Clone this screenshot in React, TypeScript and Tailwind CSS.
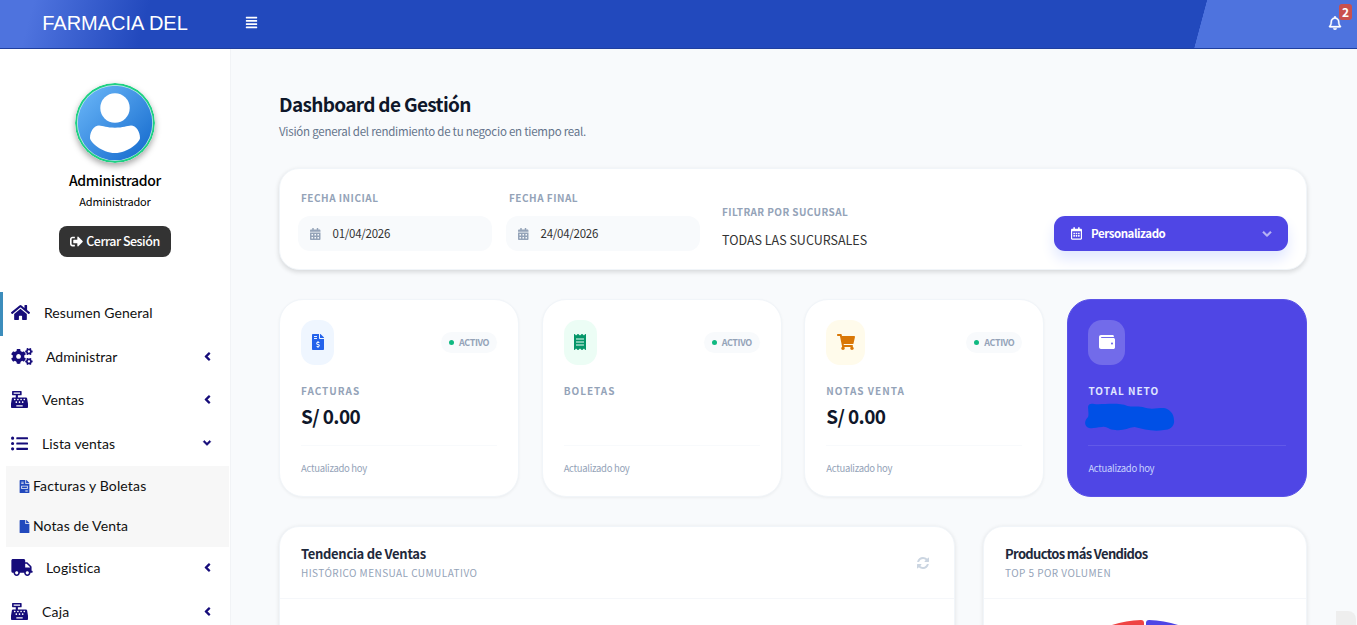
import type { ReactNode } from 'react'
import {
  FaAlignJustify,
  FaAngleDown,
  FaAngleLeft,
  FaCalendarAlt,
  FaCashRegister,
  FaChevronDown,
  FaCogs,
  FaFile,
  FaFileInvoice,
  FaFileInvoiceDollar,
  FaHome,
  FaListUl,
  FaReceipt,
  FaRegBell,
  FaRegCalendarAlt,
  FaShoppingCart,
  FaSignOutAlt,
  FaTruck,
  FaWallet,
} from 'react-icons/fa'

function Topbar() {
  return (
    <header className="flex h-[49px] shrink-0 border-b border-[#1f3f9f] bg-[#2249bd]">
      <div className="flex w-[230px] items-center justify-center bg-[linear-gradient(105deg,#4e73de_14%,#2249bd_62%)] pb-[2px] font-['Liberation_Sans',sans-serif] text-[20px] text-white">
        FARMACIA DEL
      </div>
      <div className="flex flex-1 items-center justify-between bg-[linear-gradient(105deg,#2249bd_85.7%,#4e73de_85.75%)] pl-[15px]">
        <FaAlignJustify className="mb-[3px] size-[13px] text-white" />
        <div className="relative mr-[15px] mb-[2px]">
          <FaRegBell className="size-[14px] stroke-white stroke-[12px] text-white" />
          <span className="absolute -top-[12px] left-[11px] flex h-4 w-[13px] items-center justify-center rounded-[3px] bg-[#c9504f] pb-px text-[12px] leading-none font-bold text-white">
            2
          </span>
        </div>
      </div>
    </header>
  )
}

function Avatar() {
  return (
    <svg viewBox="0 0 80 80" className="size-20 rounded-full shadow-[0_3px_6px_rgba(0,0,0,0.35)]">
      <defs>
        <linearGradient id="avatar" x1="0" y1="0" x2="1" y2="1">
          <stop offset="0.1" stopColor="#64b1f5" />
          <stop offset="0.9" stopColor="#1a6fd0" />
        </linearGradient>
      </defs>
      <circle cx="40" cy="40" r="40" fill="#1fd083" />
      <circle cx="40" cy="40" r="38" fill="#c9eef0" />
      <circle cx="40" cy="40" r="37.3" fill="url(#avatar)" />
      <circle cx="40" cy="25" r="14.7" fill="#fff" />
      <path
        d="M24 42.5c4 .2 8 2.200 16 2.200s12-2 16-2.200c5 0 9 6 9 12.500 0 4-12 15-25 15s-25-11-25-15c0-6.500 4-12.500 9-12.500Z"
        fill="#fff"
      />
    </svg>
  )
}

interface MenuItemProps {
  icon: ReactNode
  label: ReactNode
  active?: boolean
  arrow?: 'left' | 'down'
}

function MenuItem({ icon, label, active, arrow }: MenuItemProps) {
  return (
    <a
      href="#"
      className={`flex h-[43.5px] items-center border-l-[3px] pb-[2px] pl-2 text-[#160c7a] ${active ? 'border-[#3c8dbc]' : 'border-transparent'}`}
    >
      {icon}
      {label}
      {arrow === 'left' && <FaAngleLeft className="mr-4 ml-auto size-[13px] stroke-current stroke-[16px]" />}
      {arrow === 'down' && <FaAngleDown className="mr-[17px] ml-auto size-3 stroke-current stroke-[16px]" />}
    </a>
  )
}

function Sidebar() {
  return (
    <aside className="w-[231px] shrink-0 overflow-hidden border-r border-[#f1f3f6] bg-white">
      <div className="flex h-[243px] flex-col items-center pt-[34px]">
        <Avatar />
        <div className="mt-2 text-[14px] leading-[18px] font-medium tracking-[-0.3px] text-black">Administrador</div>
        <div className="mt-1 text-[11px] leading-4 tracking-[-0.15px] text-black">Administrador</div>
        <button className="mt-[17px] flex h-[31px] w-28 items-center justify-center gap-[3px] rounded-lg bg-[#333] pb-px text-[12.5px] font-medium tracking-[-0.5px] text-white">
          <FaSignOutAlt className="size-[13px]" />
          Cerrar Sesión
        </button>
      </div>
      <nav className="font-['Lato','Open_Sans',sans-serif] text-[14px] text-[#111]">
        <MenuItem
          active
          icon={<FaHome className="size-[19px]" />}
          label={<span className="ml-[14px] tracking-[0.05px] text-[#111]">Resumen General</span>}
        />
        <MenuItem
          arrow="left"
          icon={<FaCogs className="h-[17px] w-[22px]" />}
          label={<span className="ml-[13px] text-[#111]">Administrar</span>}
        />
        <MenuItem
          arrow="left"
          icon={<FaCashRegister className="size-[17px]" />}
          label={<span className="ml-[14px] tracking-[0.1px] text-[#111]">Ventas</span>}
        />
        <MenuItem
          arrow="down"
          icon={<FaListUl className="size-[17px]" />}
          label={<span className="ml-[14px] tracking-[0.1px] text-[#111]">Lista ventas</span>}
        />
        <div className="mr-px ml-[6px] h-[81px] bg-[#f7f7f7]">
          <a href="#" className="flex h-10 items-center gap-[2px] pl-3">
            <FaFileInvoice className="size-[13px] text-[#2249bd]" />
            <span className="mb-px tracking-[0.15px]">Facturas y Boletas</span>
          </a>
          <a href="#" className="flex h-10 items-center gap-[2px] pl-3">
            <FaFile className="size-[13px] text-[#2249bd]" />
            <span className="mb-px tracking-[0.1px]">Notas de Venta</span>
          </a>
        </div>
        <MenuItem
          arrow="left"
          icon={<FaTruck className="h-[17px] w-[22px]" />}
          label={<span className="ml-[13px] tracking-[0.15px] text-[#111]">Logistica</span>}
        />
        <MenuItem
          arrow="left"
          icon={<FaCashRegister className="size-[17px]" />}
          label={<span className="ml-[14px] tracking-[0.2px] text-[#111]">Caja</span>}
        />
      </nav>
    </aside>
  )
}

function DateField({ label, value }: { label: string; value: string }) {
  return (
    <div className="w-[194px]">
      <div className="pl-[3px] text-[10px] leading-4 font-bold tracking-[0.5px] text-[#94a3b8]">{label}</div>
      <div className="mt-[10px] flex h-[35px] items-center rounded-xl bg-[#f8fafc] pl-3 text-[11.5px] tracking-[-0.25px] text-[#333]">
        <FaCalendarAlt className="mr-3 h-3 w-[10.5px] text-[#94a3b8]" />
        {value}
      </div>
    </div>
  )
}

function Filters() {
  return (
    <section className="flex h-[102px] rounded-[20px] border border-[#f1f5f9] bg-white px-[18px] pt-[21px] shadow-[0_2px_5px_rgba(0,0,0,0.14)]">
      <DateField label="FECHA INICIAL" value="01/04/2026" />
      <div className="ml-[14px]">
        <DateField label="FECHA FINAL" value="24/04/2026" />
      </div>
      <div className="mt-[14px] ml-[22px]">
        <div className="text-[10px] leading-4 font-bold tracking-[0.4px] text-[#94a3b8]">FILTRAR POR SUCURSAL</div>
        <div className="mt-[11px] text-[12.5px] leading-[18px] text-[#333]">TODAS LAS SUCURSALES</div>
      </div>
      <button className="mt-[26px] ml-auto flex h-[35px] w-[234px] items-center rounded-[11px] bg-[#4f46e5] pr-4 pl-[17px] text-[11.5px] font-bold tracking-[-0.45px] text-white shadow-[0_8px_14px_#e0e7ff]">
        <FaRegCalendarAlt className="mr-[9px] h-[13px] w-[11px]" />
        Personalizado
        <FaChevronDown className="ml-auto size-[10px] stroke-current stroke-[30px] opacity-60" />
      </button>
    </section>
  )
}

interface StatCardProps {
  icon: ReactNode
  iconClass: string
  title: string
  amount?: string
}

function StatCard({ icon, iconClass, title, amount }: StatCardProps) {
  return (
    <article className="h-[198px] rounded-[24px] border border-[#f1f5f9] bg-white px-[21px] pt-5 shadow-[0_1px_3px_rgba(0,0,0,0.05)]">
      <div className="flex items-center justify-between">
        <span className={`flex h-[45px] items-center rounded-[14px] px-[10.500px] pb-px ${iconClass}`}>{icon}</span>
        <span className="flex h-[21px] w-14 items-center justify-center gap-[5px] rounded-full bg-[#f8fafc] text-[9px] font-bold tracking-[-0.4px] text-[#94a3b8]">
          <i className="size-[5px] rounded-full bg-[#10b981]" />
          ACTIVO
        </span>
      </div>
      <div className="mt-[18px] text-[10px] leading-4 font-bold tracking-[1px] text-[#94a3b8]">{title}</div>
      <div className="mt-[5px] h-6 text-[19px] leading-6 font-bold tracking-[-0.6px] text-[#0f172a]">{amount}</div>
      <div className="mt-[17px] border-t border-[#f8fafc] pt-[14px] text-[9.5px] leading-4 tracking-[-0.3px] text-[#94a3b8]">
        Actualizado hoy
      </div>
    </article>
  )
}

function TotalCard() {
  return (
    <article className="h-[198px] rounded-[24px] border border-[#5b53e7] bg-[#4f46e5] px-[20.5px] pt-5">
      <span className="flex h-[45px] w-[37px] items-center justify-center rounded-[14px] bg-white/20 pb-px text-white">
        <FaWallet className="size-4" />
      </span>
      <div className="mt-[18px] text-[10px] leading-4 font-bold tracking-[1px] text-[#e0e7ff]">TOTAL NETO</div>
      <svg viewBox="0 0 90 30" className="mt-[4px] -ml-[3px] h-[30px] w-[91px]" preserveAspectRatio="none">
        <path
          d="M3 4C3 1 6 0 9 1c8 1 24-2 33 2 4 1 9 0 15 1 8 3 13 1 21 1 6 1 10 6 10 12 1 6-4 10-10 10-11 2-20-1-29-3-7 1-11 4-19 3-7 0-8-4-13-3-6 0-9 2-13 1-5-2-5-7-1-11 1-3 0-7 0-10Z"
          fill="#0050e6"
        />
      </svg>
      <div className="mt-3 border-t border-[#6159e8] pt-[14px] text-[9.5px] leading-4 tracking-[-0.3px] text-[#c7d2fe]">
        Actualizado hoy
      </div>
    </article>
  )
}

function RefreshIcon() {
  return (
    <svg viewBox="0 0 1536 1536" className="size-3 fill-[#cbd5e1]">
      <path d="M1511 928q0 5-1 7-64 268-268 434.500T764 1536q-146 0-282.500-55T238 1324l-129 129q-19 19-45 19t-45-19-19-45V960q0-26 19-45t45-19h448q26 0 45 19t19 45-19 45l-137 137q71 66 161 102t187 36q134 0 250-65t186-179q11-17 53-117 8-23 30-23h192q13 0 22.500 9.500t9.500 22.500zm25-800v448q0 26-19 45t-45 19h-448q-26 0-45-19t-19-45 19-45l138-138Q969 256 768 256q-134 0-250 65T332 500q-11 17-53 117-8 23-30 23H50q-13 0-22.500-9.500T18 608v-7q65-268 270-434.500T768 0q146 0 284 55.500T1297 212l130-129q19-19 45-19t45 19 19 45z" />
    </svg>
  )
}

interface PanelHeaderProps {
  title: ReactNode
  subtitle: string
  children?: ReactNode
}

function PanelHeader({ title, subtitle, children }: PanelHeaderProps) {
  return (
    <div className="flex h-[72px] items-center justify-between border-b border-[#f5f7fa] pr-[25px] pl-[21px]">
      <div>
        <h3 className="text-[13px] leading-5 font-bold tracking-[-0.3px] text-[#1e293b]">{title}</h3>
        <p className="text-[10px] leading-[18px] tracking-[0.45px] text-[#94a3b8]">{subtitle}</p>
      </div>
      {children}
    </div>
  )
}

export default function App() {
  return (
    <div className="flex h-[625px] flex-col overflow-hidden bg-[#f8fafc] font-['Noto_Sans_CJK_SC',sans-serif]">
      <Topbar />
      <div className="flex min-h-0 flex-1">
        <Sidebar />
        <main className="relative flex-1 overflow-hidden pt-[43px] pr-[50px] pl-12">
          <h1 className="text-[19px] leading-6 font-bold tracking-[-0.67px] text-[#0f172a]">Dashboard de Gestión</h1>
          <p className="mt-[6px] text-[11.5px] leading-[18px] tracking-[-0.24px] text-[#64748b]">
            Visión general del rendimiento de tu negocio en tiempo real.
          </p>
          <div className="mt-7">
            <Filters />
          </div>
          <div className="mt-[29px] grid grid-cols-4 gap-[22.5px]">
            <StatCard
              icon={<FaFileInvoiceDollar className="h-4 w-3" />}
              iconClass="bg-[#eff6ff] text-[#2563eb]"
              title="FACTURAS"
              amount="S/ 0.00"
            />
            <StatCard icon={<FaReceipt className="h-4 w-3" />} iconClass="bg-[#ecfdf5] text-[#059669]" title="BOLETAS" />
            <StatCard
              icon={<FaShoppingCart className="h-4 w-[18px]" />}
              iconClass="bg-[#fffbeb] text-[#d97706]"
              title="NOTAS VENTA"
              amount="S/ 0.00"
            />
            <TotalCard />
          </div>
          <div className="mt-[29px] flex gap-7">
            <section className="h-[300px] w-[676px] rounded-[20px] border border-[#f1f5f9] bg-white shadow-[0_1px_4px_rgba(0,0,0,0.1)]">
              <PanelHeader title="Tendencia de Ventas" subtitle="HISTÓRICO MENSUAL CUMULATIVO">
                <RefreshIcon />
              </PanelHeader>
            </section>
            <section className="h-[300px] flex-1 rounded-[20px] border border-[#f1f5f9] bg-white shadow-[0_1px_4px_rgba(0,0,0,0.1)]">
              <PanelHeader
                title={<span className="tracking-[-0.65px]">Productos más Vendidos</span>}
                subtitle="TOP 5 POR VOLUMEN"
              />
              <svg viewBox="0 0 200 200" className="mx-auto mt-[21px] size-[200px]">
                <path d="M10 55L64 6A106 106 0 0 1 96 0Q99 0 99 3V30H60Z" fill="#ef4444" />
                <path d="M190 55L136 6A106 106 0 0 0 104 0Q101 0 101 3V30H140Z" fill="#4f46e5" />
              </svg>
            </section>
          </div>
          <div className="absolute right-px bottom-0 h-[14px] w-5 rounded-tr-lg bg-[#eee]" />
        </main>
      </div>
    </div>
  )
}
